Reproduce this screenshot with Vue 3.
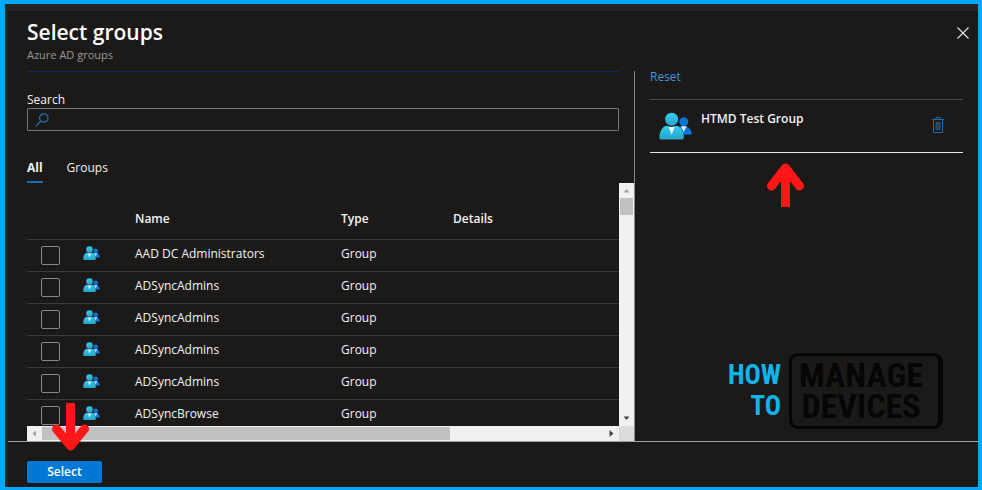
<script setup>
import { ref } from 'vue'

const search = ref('')
const activeTab = ref('All')
const tabs = ['All', 'Groups']
const rows = ref([
  { id: 1, name: 'AAD DC Administrators', type: 'Group', checked: false },
  { id: 2, name: 'ADSyncAdmins', type: 'Group', checked: false },
  { id: 3, name: 'ADSyncAdmins', type: 'Group', checked: false },
  { id: 4, name: 'ADSyncAdmins', type: 'Group', checked: false },
  { id: 5, name: 'ADSyncAdmins', type: 'Group', checked: false },
  { id: 6, name: 'ADSyncBrowse', type: 'Group', checked: false }
])
</script>

<template>
  <div class="frame">
    <svg class="defs" aria-hidden="true">
      <defs>
        <linearGradient id="front" x1="0" y1="0" x2="0" y2="1">
          <stop offset="0" stop-color="#35cdf0" />
          <stop offset="1" stop-color="#27a3cb" />
        </linearGradient>
        <linearGradient id="back" x1="0" y1="0" x2="0" y2="1">
          <stop offset="0" stop-color="#0a6fd0" />
          <stop offset="1" stop-color="#0f7fe0" />
        </linearGradient>
        <symbol id="people" viewBox="0 0 34 28">
          <circle cx="25.5" cy="9.5" r="4.6" fill="url(#back)" />
          <path d="M18 22.8V20c0-3.600 3-6 7.500-6s8 3.500 8 7.600c0 .8-.5 1.200-1.200 1.200z" fill="url(#back)" />
          <path d="M22.500 14.300h6l-3 6z" fill="#d9f0fb" />
          <circle cx="13" cy="7" r="6.700" fill="url(#front)" />
          <path d="M7.500 13.700C3.500 14.500.4 20 .4 25.800c0 1.200.7 2 1.900 2h21.400c1.200 0 1.900-.8 1.900-2 0-5.800-3.100-11.300-7.100-12.100-3.300 1.600-7.700 1.600-11 0z" fill="url(#front)" />
          <path d="M9.600 14.500c2.300.8 4.500.8 6.800 0L13 23z" fill="#e4f8fd" />
        </symbol>
      </defs>
    </svg>

    <section class="blade">
      <header class="head">
        <div>
          <h1>Select groups</h1>
          <p>Azure AD groups</p>
        </div>
        <button class="plain close" type="button" aria-label="Close">
          <svg width="12" height="12" viewBox="0 0 12 12"><path d="M.5.5l11 11M11.500.5l-11 11" stroke="#e8e8e8" stroke-width="1.100" /></svg>
        </button>
      </header>

      <main class="main">
        <div class="picker">
          <div class="search">
            <label for="search">Search</label>
            <div class="box">
              <svg width="14" height="14" viewBox="0 0 14 14" fill="none" stroke="#2273b0" stroke-width="1.200"><circle cx="8.800" cy="5" r="4.200" /><path d="M5.800 8L.6 13.300" /></svg>
              <input id="search" v-model="search" type="text" />
            </div>
          </div>

          <nav class="tabs" role="tablist">
            <button
              v-for="tab in tabs"
              :key="tab"
              class="plain tab"
              :class="{ active: tab === activeTab }"
              type="button"
              role="tab"
              :aria-selected="tab === activeTab"
              @click="activeTab = tab"
            >{{ tab }}</button>
          </nav>

          <div class="grid">
            <div class="viewport">
              <table>
                <colgroup>
                  <col class="c-check" /><col class="c-icon" /><col class="c-name" /><col class="c-type" /><col />
                </colgroup>
                <thead>
                  <tr><th></th><th></th><th>Name</th><th>Type</th><th>Details</th></tr>
                </thead>
                <tbody>
                  <tr v-for="row in rows" :key="row.id">
                    <td class="check"><input v-model="row.checked" type="checkbox" :aria-label="row.name" /></td>
                    <td><svg class="small"><use href="#people" /></svg></td>
                    <td>{{ row.name }}</td>
                    <td>{{ row.type }}</td>
                    <td></td>
                  </tr>
                </tbody>
              </table>
            </div>
            <div class="bar vertical">
              <svg width="15" height="15" viewBox="0 0 15 15"><path d="M4.500 9.500L7.500 6l3 3.500z" fill="#a3a3a3" /></svg>
              <span class="thumb"></span>
              <svg class="end" width="15" height="15" viewBox="0 0 15 15"><path d="M4.500 5.500h6l-3 3.500z" fill="#484848" /></svg>
            </div>
            <div class="bar horizontal">
              <svg width="15" height="15" viewBox="0 0 15 15"><path d="M9 4.500v6L5.500 7.500z" fill="#a3a3a3" /></svg>
              <span class="thumb"></span>
              <svg class="end" width="15" height="15" viewBox="0 0 15 15"><path d="M5.500 4v7L9.500 7.500z" fill="#484848" /></svg>
            </div>
            <div class="corner"></div>
          </div>
        </div>

        <aside class="selected">
          <a class="reset" href="#">Reset</a>
          <div class="item">
            <svg class="large"><use href="#people" /></svg>
            <strong>HTMD Test Group</strong>
            <button class="plain trash" type="button" aria-label="Remove HTMD Test Group">
              <svg width="12" height="16" viewBox="0 0 12 16" fill="none" stroke="#1b69a8">
                <path d="M0 2.500h12M4 2.500v-2h4v2M1.500 2.500v13h9v-13" />
                <path d="M4 5.500h4v7H4z" fill="#16466e" stroke="#1b5a8e" />
              </svg>
            </button>
            <svg class="arrow up" viewBox="0 0 37 44" fill="none" stroke="#ff1616">
              <path d="M18.500 44V8" stroke-width="9" />
              <path d="M4.500 23L18.500 5l14 18" stroke-width="9" stroke-linecap="round" stroke-linejoin="round" />
            </svg>
          </div>
          <div class="logo">
            <div class="how"><span>HOW</span><span>TO</span></div>
            <div class="phone"><span>MANAGE</span><span>DEVICES</span></div>
          </div>
        </aside>
      </main>

      <footer class="foot">
        <button class="primary" type="button">Select</button>
        <svg class="arrow down" viewBox="0 0 37 48" fill="none" stroke="#ff1616">
          <path d="M18.500 0v40" stroke-width="9" />
          <path d="M4.500 26L18.500 43l14-17" stroke-width="9" stroke-linecap="round" stroke-linejoin="round" />
        </svg>
      </footer>
    </section>
  </div>
</template>

<style>
body {
  margin: 0;
  background: #1b1a19;
}
</style>

<style scoped>
* {
  box-sizing: border-box;
}
.frame {
  display: flex;
  height: 100vh;
  min-height: 400px;
  border: solid #03a9fc;
  border-width: 4px 4px 3px 5px;
  background: #23272b;
  color: #f3f2f1;
  font: 12px/16px "Open Sans", "Noto Sans", sans-serif;
}
.defs {
  position: absolute;
  width: 0;
  height: 0;
}
.blade {
  flex: 1;
  min-width: 0;
  display: flex;
  flex-direction: column;
  margin-left: 3px;
  border-top: 7px solid #252525;
  background: #1b1a19;
}
.plain {
  padding: 0;
  border: 0;
  background: none;
  color: inherit;
  font: inherit;
}
.head {
  display: flex;
  justify-content: space-between;
  align-items: flex-start;
  height: 60px;
  padding: 7px 9px 0 19px;
}
h1 {
  margin: 0;
  font-size: 21px;
  line-height: 29px;
  font-weight: 600;
  color: #fff;
}
.head p {
  margin: 0;
  font-size: 11px;
  color: #9a9896;
}
.close {
  display: flex;
  margin-top: 9px;
}
.main {
  flex: 1;
  min-height: 0;
  display: flex;
  padding-left: 19px;
}
.picker {
  flex: 1;
  min-width: 0;
  display: flex;
  flex-direction: column;
}
.search {
  margin-right: 15px;
  padding-top: 20px;
  border-top: 1px solid #0c2a5c;
}
.search label {
  display: block;
}
.box {
  display: flex;
  align-items: center;
  height: 23px;
  padding-left: 7px;
  border: 1px solid #787776;
  border-radius: 1px;
}
.box input {
  flex: 1;
  min-width: 0;
  border: 0;
  outline: 0;
  background: none;
  color: inherit;
  font: inherit;
}
.tabs {
  display: flex;
  gap: 24px;
  padding-top: 28px;
}
.tab {
  height: 24px;
  padding-bottom: 5px;
  border-bottom: 2px solid transparent;
}
.tab.active {
  border-color: #1d6fb0;
  font-weight: 700;
}
.grid {
  flex: 1;
  min-height: 0;
  display: grid;
  grid-template: minmax(0, 1fr) 15px / minmax(0, 1fr) 15px;
}
.viewport {
  overflow: hidden;
}
table {
  width: 100%;
  table-layout: fixed;
  border-collapse: collapse;
}
.c-check {
  width: 56px;
}
.c-icon {
  width: 52px;
}
.c-name {
  width: 206px;
}
.c-type {
  width: 112px;
}
th {
  height: 56px;
  padding: 16px 0 0;
  text-align: left;
  font-weight: 600;
}
tr {
  border-bottom: 1px solid #3b3a39;
}
td {
  height: 32px;
  padding: 0 0 2px;
}
.check {
  padding: 0 0 0 14px;
}
.check input {
  display: block;
  appearance: none;
  width: 19px;
  height: 19px;
  margin: 0;
  border: 1px solid #8a8886;
  border-radius: 2px;
}
.small {
  display: block;
  width: 17px;
  height: 14px;
  margin-bottom: 2px;
}
.bar {
  display: flex;
  background: #f1f1f1;
}
.bar svg {
  flex: none;
}
.bar .end {
  margin-left: auto;
}
.vertical {
  flex-direction: column;
}
.vertical .end {
  margin: auto 0 0;
}
.vertical .thumb {
  height: 17px;
  margin: 0 1px;
  background: #c1c1c1;
}
.horizontal .thumb {
  width: 69%;
  margin: 1px 0;
  background: #c1c1c1;
}
.corner {
  background: #dcdcdc;
}
.selected {
  display: flex;
  flex-direction: column;
  width: 344px;
  padding: 0 15px 12px;
  border-left: 1px solid #8a8886;
}
.reset {
  align-self: flex-start;
  margin: -2px 0 14px;
  color: #3a96dd;
  text-decoration: none;
}
.item {
  position: relative;
  display: flex;
  align-items: flex-start;
  height: 54px;
  padding: 11px 19px 0 9px;
  border-top: 1px solid #4a4948;
  border-bottom: 1px solid #e8e6e4;
}
.item strong {
  flex: 1;
  margin-left: 9px;
  font-weight: 600;
}
.large {
  width: 33px;
  height: 28px;
  margin-top: 1px;
}
.trash {
  display: flex;
  margin-top: 6px;
}
.arrow {
  position: absolute;
  width: 37px;
}
.up {
  top: 63px;
  left: 117px;
  height: 44px;
}
.down {
  top: -39px;
  left: 44px;
  height: 48px;
}
.logo {
  display: flex;
  align-items: center;
  align-self: flex-end;
  gap: 8px;
  margin: auto 20px 0 0;
  font-family: "Liberation Sans Narrow", "Roboto Condensed", "Liberation Sans", sans-serif;
  font-weight: 700;
}
.how {
  display: flex;
  flex-direction: column;
  align-items: flex-end;
  color: #12b4ec;
  font-size: 27px;
  line-height: 31px;
}
.phone {
  display: flex;
  flex-direction: column;
  align-items: center;
  width: 154px;
  padding: 4px 12px 4px 4px;
  border: 3px solid #060606;
  border-right-width: 5px;
  border-radius: 9px;
  color: #060606;
  font-size: 34px;
  line-height: 31px;
}
.foot {
  position: relative;
  height: 46px;
  padding: 19px 19px 0;
  border-top: 1px solid #a5a3a1;
}
.primary {
  display: block;
  width: 75px;
  height: 22px;
  padding: 0;
  border: 0;
  border-radius: 2px;
  background: #0078d4;
  color: #fff;
  font: inherit;
  font-weight: 600;
}
</style>
